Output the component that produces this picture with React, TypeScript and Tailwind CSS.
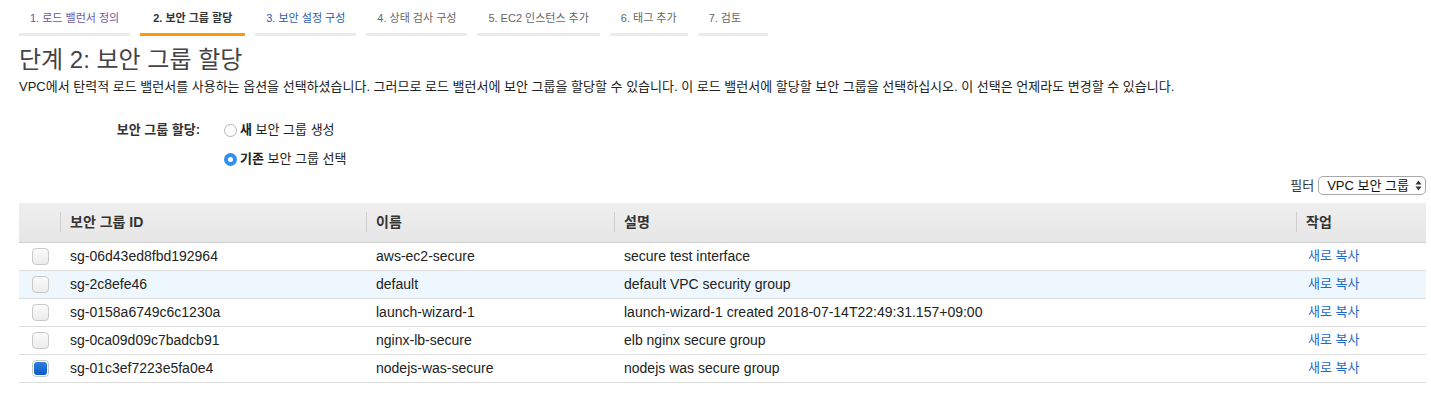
import { useState } from "react"

const font = "font-['Liberation_Sans','Noto_Sans_CJK_KR',sans-serif]"

const steps = [
  { label: "1. 로드 밸런서 정의", state: "visited" },
  { label: "2. 보안 그룹 할당", state: "active" },
  { label: "3. 보안 설정 구성", state: "link" },
  { label: "4. 상태 검사 구성", state: "idle" },
  { label: "5. EC2 인스턴스 추가", state: "idle" },
  { label: "6. 태그 추가", state: "idle" },
  { label: "7. 검토", state: "idle" },
]

const groups = [
  { id: "sg-06d43ed8fbd192964", name: "aws-ec2-secure", desc: "secure test interface" },
  { id: "sg-2c8efe46", name: "default", desc: "default VPC security group" },
  { id: "sg-0158a6749c6c1230a", name: "launch-wizard-1", desc: "launch-wizard-1 created 2018-07-14T22:49:31.157+09:00" },
  { id: "sg-0ca09d09c7badcb91", name: "nginx-lb-secure", desc: "elb nginx secure group" },
  { id: "sg-01c3ef7223e5fa0e4", name: "nodejs-was-secure", desc: "nodejs was secure group" },
]

const cols = "grid grid-cols-[41px_306px_248px_682px_1fr]"

const Radio = ({ checked }: { checked: boolean }) =>
  checked ? (
    <span className="flex h-[13px] w-[13px] items-center justify-center rounded-full bg-[#2d8ff0]">
      <span className="h-[5px] w-[5px] rounded-full bg-white" />
    </span>
  ) : (
    <span className="h-[13px] w-[13px] rounded-full border border-[#b5b5b5] bg-white" />
  )

const Check = ({ checked }: { checked: boolean }) =>
  checked ? (
    <span className="flex h-[17px] w-[17px] items-center justify-center rounded-[4px] border border-[#c9c9c9] bg-white">
      <span className="h-[13px] w-[13px] rounded-[3px] bg-gradient-to-b from-[#2f7fe0] to-[#0b5cc7]" />
    </span>
  ) : (
    <span className="h-[17px] w-[17px] rounded-[4px] border border-[#c9c9c9] bg-gradient-to-b from-[#fafafa] to-[#ececec]" />
  )

export default function App() {
  const [selected] = useState(4)
  return (
    <div className={`${font} min-h-[407px] bg-white pl-[19px] pr-[5px] text-[#222]`}>
      <div className="flex gap-[10px] pt-[11px]">
        {steps.map((s) => (
          <div
            key={s.label}
            className={`min-w-[70px] border-b-[3px] px-[11px] pb-[7px] text-[11px] leading-[15px] ${
              s.state === "active"
                ? "border-[#f90] px-[13px] font-bold text-[#333]"
                : "border-[#ebebeb] " +
                  (s.state === "visited" ? "text-[#6b54a6]" : s.state === "link" ? "text-[#1f5aa8]" : "text-[#666]")
            }`}
          >
            {s.label}
          </div>
        ))}
      </div>

      <h1 className="mt-[10px] text-[24px] leading-[28px] text-[#444]">단계 2: 보안 그룹 할당</h1>
      <p className="mt-[4px] text-[13px] leading-[18px]">
        VPC에서 탄력적 로드 밸런서를 사용하는 옵션을 선택하셨습니다. 그러므로 로드 밸런서에 보안 그룹을 할당할 수 있습니다. 이 로드 밸런서에 할당할 보안 그룹을 선택하십시오. 이 선택은 언제라도 변경할 수 있습니다.
      </p>

      <div className="mt-[25px] flex text-[13px] leading-[18px]">
        <div className="w-[181px] text-right font-bold text-[#333]">보안 그룹 할당:</div>
        <div className="ml-[24px] flex flex-col gap-[11px]">
          <label className="flex items-center gap-[3px]">
            <Radio checked={false} />
            <span>
              <b>새</b> 보안 그룹 생성
            </span>
          </label>
          <label className="flex items-center gap-[3px]">
            <Radio checked />
            <span>
              <b>기존</b> 보안 그룹 선택
            </span>
          </label>
        </div>
      </div>

      <div className="mt-[8px] flex items-center justify-end gap-[4px] text-[13px]">
        <span className="text-[#333]">필터</span>
        <div className="flex h-[19px] items-center gap-[6px] rounded-[5px] border border-[#a8a8a8] pl-[8px] pr-[3px] text-[#111]">
          <span>VPC 보안 그룹</span>
          <svg width="7" height="11" viewBox="0 0 7 11" className="fill-[#333]">
            <path d="M3.5 0.5 L6.5 4.5 H0.5 Z" />
            <path d="M3.5 10.5 L6.5 6.5 H0.5 Z" />
          </svg>
        </div>
      </div>

      <div className="mt-[7px] text-[14px]">
        <div className={`${cols} h-[40px] items-center border-b border-[#cfcfcf] bg-gradient-to-b from-[#efefef] to-[#e6e6e6] font-bold text-[#333]`}>
          <div />
          {["보안 그룹 ID", "이름", "설명", "작업"].map((h) => (
            <div key={h} className="border-l border-[#cfcfcf] pl-[9px] leading-[20px]">
              {h}
            </div>
          ))}
        </div>
        {groups.map((g, i) => (
          <div
            key={g.id}
            className={`${cols} h-[28px] items-center border-b border-[#dddddd] ${i === 1 ? "bg-[#edf7fd]" : "bg-white"}`}
          >
            <div className="flex justify-center pl-[1px]">
              <Check checked={i === selected} />
            </div>
            <div className="pl-[10px]">{g.id}</div>
            <div className="pl-[10px]">{g.name}</div>
            <div className="pl-[10px]">{g.desc}</div>
            <div className="pl-[12px] text-[13px] text-[#1d6ac8]">새로 복사</div>
          </div>
        ))}
      </div>
    </div>
  )
}
